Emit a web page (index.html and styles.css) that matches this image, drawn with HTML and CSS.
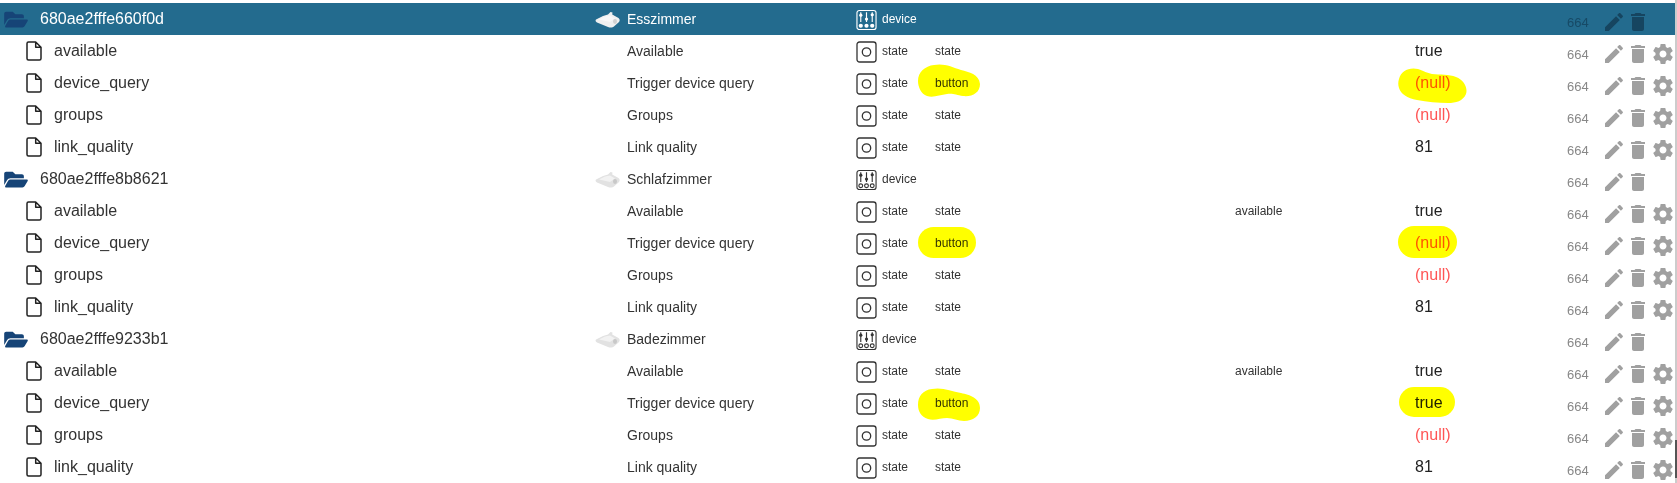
FILE: index.html
```html
<!DOCTYPE html>
<html lang="de">
<head>
<meta charset="utf-8">
<title>Objekte</title>
<link rel="stylesheet" href="styles.css">
</head>
<body>
<svg class="defs" width="0" height="0" aria-hidden="true">
  <defs>
    <symbol id="i-folder" viewBox="0 0 576 512"><path d="M572.694 292.093L500.27 416.248A63.997 63.997 0 0 1 444.989 448H45.025c-18.523 0-30.064-20.093-20.731-36.093l72.424-124.155A64 64 0 0 1 152 256h399.964c18.523 0 30.064 20.093 20.73 36.093zM152 224h328v-48c0-26.51-21.49-48-48-48H272l-64-64H48C21.49 64 0 85.49 0 112v278.046l69.077-118.418C86.214 242.25 117.989 224 152 224z"/></symbol>
    <symbol id="i-file" viewBox="0 0 16 20"><path d="M2.5 1h7.2L15 6.300v11.200a1.500 1.500 0 0 1-1.500 1.500h-11A1.500 1.500 0 0 1 1 17.500v-15A1.500 1.500 0 0 1 2.500 1zM9.700 1v5.300H15" fill="none" stroke="currentColor" stroke-width="1.500" stroke-linejoin="round"/></symbol>
    <symbol id="i-pencil" viewBox="0 0 24 24"><path d="M3 17.250V21h3.750L17.810 9.940l-3.750-3.750L3 17.250zM20.710 7.040c.39-.39.39-1.020 0-1.410l-2.340-2.340c-.39-.39-1.020-.39-1.410 0l-1.830 1.830 3.750 3.750 1.830-1.830z"/></symbol>
    <symbol id="i-trash" viewBox="0 0 24 24"><path d="M6 19c0 1.100.9 2 2 2h8c1.100 0 2-.9 2-2V7H6v12zM19 4h-3.500l-1-1h-5l-1 1H5v2h14V4z"/></symbol>
    <symbol id="i-gear" viewBox="0 0 24 24"><path d="M19.430 12.980c.04-.32.07-.64.07-.98s-.03-.66-.07-.98l2.110-1.650c.19-.15.24-.42.12-.64l-2-3.460c-.12-.22-.39-.3-.61-.22l-2.490 1c-.52-.4-1.080-.73-1.690-.98l-.38-2.650A.488.488 0 0 0 14 2h-4c-.25 0-.46.18-.49.420l-.38 2.650c-.61.25-1.170.59-1.690.98l-2.490-1c-.23-.09-.49 0-.61.220l-2 3.460c-.13.220-.07.490.12.640l2.110 1.650c-.04.320-.07.650-.07.980s.03.660.07.980l-2.110 1.650c-.19.150-.24.420-.12.640l2 3.460c.12.220.39.300.61.220l2.490-1c.52.400 1.080.730 1.690.980l.38 2.650c.03.240.24.420.49.420h4c.25 0 .46-.18.49-.42l.38-2.650c.61-.25 1.170-.59 1.690-.98l2.490 1c.23.090.49 0 .61-.22l2-3.460c.12-.22.070-.49-.12-.64l-2.110-1.650zM12 15.500c-1.930 0-3.500-1.570-3.500-3.500s1.570-3.500 3.500-3.500 3.500 1.570 3.500 3.500-1.570 3.500-3.500 3.500z"/></symbol>
    <symbol id="i-state" viewBox="0 0 21 22"><rect x="1" y="1" width="19" height="20" rx="2.500" fill="none" stroke="currentColor" stroke-width="1.300"/><circle cx="10.500" cy="11" r="4.200" fill="none" stroke="currentColor" stroke-width="1.300"/></symbol>
    <symbol id="i-device" viewBox="0 0 22 22"><rect x="1" y="1" width="20" height="20" rx="2.500" fill="none" stroke="currentColor" stroke-width="1.200"/><path d="M5 3v10M11 3v10M17 3v10" fill="none" stroke="currentColor" stroke-width="1.200"/><circle cx="5" cy="6" r="1.700" fill="currentColor"/><circle cx="11" cy="10" r="1.700" fill="currentColor"/><circle cx="17" cy="5.500" r="1.700" fill="currentColor"/><circle cx="5" cy="17" r="2" fill="none" stroke="currentColor" stroke-width="1.200"/><circle cx="11" cy="17" r="2" fill="none" stroke="currentColor" stroke-width="1.200"/><circle cx="17" cy="17" r="2" fill="none" stroke="currentColor" stroke-width="1.200"/></symbol>
    <symbol id="i-device-on" viewBox="0 0 22 22"><rect x="1" y="1" width="20" height="20" rx="2.500" fill="none" stroke="currentColor" stroke-width="1.200"/><path d="M5 3v10M11 3v10M17 3v10" fill="none" stroke="currentColor" stroke-width="1.200"/><circle cx="5" cy="6" r="1.700" fill="currentColor"/><circle cx="11" cy="10" r="1.700" fill="currentColor"/><circle cx="17" cy="5.500" r="1.700" fill="currentColor"/><circle cx="5" cy="17" r="2.200" fill="currentColor"/><circle cx="11" cy="17" r="2.200" fill="currentColor"/><circle cx="17" cy="17" r="2.200" fill="currentColor"/></symbol>
    <filter id="soft" x="-20%" y="-20%" width="140%" height="140%"><feGaussianBlur stdDeviation="0.500"/></filter>
    <symbol id="i-plug" viewBox="0 0 25 17"><g filter="url(#soft)"><path d="M1 8.500L8 5l5-1.500L15.500 1l2 .5-.3 2L23.500 7c1.500 1.200 1.500 3 .5 4l-4.500 4c-2 1.800-4 2-6.500 1L2 11.500c-1.500-.7-1.800-2.200-1-3z"/><path d="M4 8.500l6-3 5-1 5 3-5 3.500z" fill="#fff" opacity=".55"/><ellipse cx="20" cy="10.500" rx="2" ry="2.400" fill="#999" opacity=".35"/></g></symbol>
  </defs>
</svg>

<main class="tree">
  <div class="row row-selected">
    <div class="c-name"><svg class="ico-folder"><use href="#i-folder"/></svg><span>680ae2fffe660f0d</span></div>
    <div class="c-room-ico"><svg class="ico-plug"><use href="#i-plug"/></svg></div>
    <div class="c-title">Esszimmer</div>
    <div class="c-type"><svg class="ico-type"><use href="#i-device-on"/></svg><span>device</span></div>
    <div class="c-role"></div><div class="c-room"></div><div class="c-val"></div>
    <div class="c-num">664</div>
    <div class="c-act"><svg class="ico-pencil"><use href="#i-pencil"/></svg><svg class="ico-trash"><use href="#i-trash"/></svg></div>
  </div>
  <div class="row">
    <div class="c-name c-child"><svg class="ico-file"><use href="#i-file"/></svg><span>available</span></div>
    <div class="c-room-ico"></div>
    <div class="c-title">Available</div>
    <div class="c-type"><svg class="ico-type"><use href="#i-state"/></svg><span>state</span></div>
    <div class="c-role">state</div><div class="c-room"></div><div class="c-val">true</div>
    <div class="c-num">664</div>
    <div class="c-act"><svg class="ico-pencil"><use href="#i-pencil"/></svg><svg class="ico-trash"><use href="#i-trash"/></svg><svg class="ico-gear"><use href="#i-gear"/></svg></div>
  </div>
  <div class="row">
    <div class="c-name c-child"><svg class="ico-file"><use href="#i-file"/></svg><span>device_query</span></div>
    <div class="c-room-ico"></div>
    <div class="c-title">Trigger device query</div>
    <div class="c-type"><svg class="ico-type"><use href="#i-state"/></svg><span>state</span></div>
    <div class="c-role">button<svg class="mark mark-role1" viewBox="0 0 62 34" preserveAspectRatio="none"><path d="M16 1C26-1 34 3 43 6c8 2 18 4 19 14 0 9-8 13-17 12-7-1-10-3-16-2-7 1-14 4-20 2C3 30 0 23 0 17 0 8 7 2 16 1z"/></svg></div>
    <div class="c-room"></div>
    <div class="c-val null">(null)<svg class="mark mark-val1" viewBox="0 0 69 35" preserveAspectRatio="none"><path d="M1 11C3 3 11-1 20 1c6 2 9 4 14 5 8 1 17 0 24 3 8 3 12 11 10 17-3 7-10 9-18 9-10 0-21-1-31-3C9 30 3 26 1 20c-1-3-1-6 0-9z"/></svg></div>
    <div class="c-num">664</div>
    <div class="c-act"><svg class="ico-pencil"><use href="#i-pencil"/></svg><svg class="ico-trash"><use href="#i-trash"/></svg><svg class="ico-gear"><use href="#i-gear"/></svg></div>
  </div>
  <div class="row">
    <div class="c-name c-child"><svg class="ico-file"><use href="#i-file"/></svg><span>groups</span></div>
    <div class="c-room-ico"></div>
    <div class="c-title">Groups</div>
    <div class="c-type"><svg class="ico-type"><use href="#i-state"/></svg><span>state</span></div>
    <div class="c-role">state</div><div class="c-room"></div><div class="c-val null">(null)</div>
    <div class="c-num">664</div>
    <div class="c-act"><svg class="ico-pencil"><use href="#i-pencil"/></svg><svg class="ico-trash"><use href="#i-trash"/></svg><svg class="ico-gear"><use href="#i-gear"/></svg></div>
  </div>
  <div class="row">
    <div class="c-name c-child"><svg class="ico-file"><use href="#i-file"/></svg><span>link_quality</span></div>
    <div class="c-room-ico"></div>
    <div class="c-title">Link quality</div>
    <div class="c-type"><svg class="ico-type"><use href="#i-state"/></svg><span>state</span></div>
    <div class="c-role">state</div><div class="c-room"></div><div class="c-val">81</div>
    <div class="c-num">664</div>
    <div class="c-act"><svg class="ico-pencil"><use href="#i-pencil"/></svg><svg class="ico-trash"><use href="#i-trash"/></svg><svg class="ico-gear"><use href="#i-gear"/></svg></div>
  </div>

  <div class="row">
    <div class="c-name"><svg class="ico-folder"><use href="#i-folder"/></svg><span>680ae2fffe8b8621</span></div>
    <div class="c-room-ico"><svg class="ico-plug"><use href="#i-plug"/></svg></div>
    <div class="c-title">Schlafzimmer</div>
    <div class="c-type"><svg class="ico-type"><use href="#i-device"/></svg><span>device</span></div>
    <div class="c-role"></div><div class="c-room"></div><div class="c-val"></div>
    <div class="c-num">664</div>
    <div class="c-act"><svg class="ico-pencil"><use href="#i-pencil"/></svg><svg class="ico-trash"><use href="#i-trash"/></svg></div>
  </div>
  <div class="row">
    <div class="c-name c-child"><svg class="ico-file"><use href="#i-file"/></svg><span>available</span></div>
    <div class="c-room-ico"></div>
    <div class="c-title">Available</div>
    <div class="c-type"><svg class="ico-type"><use href="#i-state"/></svg><span>state</span></div>
    <div class="c-role">state</div><div class="c-room">available</div><div class="c-val">true</div>
    <div class="c-num">664</div>
    <div class="c-act"><svg class="ico-pencil"><use href="#i-pencil"/></svg><svg class="ico-trash"><use href="#i-trash"/></svg><svg class="ico-gear"><use href="#i-gear"/></svg></div>
  </div>
  <div class="row">
    <div class="c-name c-child"><svg class="ico-file"><use href="#i-file"/></svg><span>device_query</span></div>
    <div class="c-room-ico"></div>
    <div class="c-title">Trigger device query</div>
    <div class="c-type"><svg class="ico-type"><use href="#i-state"/></svg><span>state</span></div>
    <div class="c-role">button<span class="pill pill-role"></span></div>
    <div class="c-room"></div>
    <div class="c-val null">(null)<span class="pill pill-val"></span></div>
    <div class="c-num">664</div>
    <div class="c-act"><svg class="ico-pencil"><use href="#i-pencil"/></svg><svg class="ico-trash"><use href="#i-trash"/></svg><svg class="ico-gear"><use href="#i-gear"/></svg></div>
  </div>
  <div class="row">
    <div class="c-name c-child"><svg class="ico-file"><use href="#i-file"/></svg><span>groups</span></div>
    <div class="c-room-ico"></div>
    <div class="c-title">Groups</div>
    <div class="c-type"><svg class="ico-type"><use href="#i-state"/></svg><span>state</span></div>
    <div class="c-role">state</div><div class="c-room"></div><div class="c-val null">(null)</div>
    <div class="c-num">664</div>
    <div class="c-act"><svg class="ico-pencil"><use href="#i-pencil"/></svg><svg class="ico-trash"><use href="#i-trash"/></svg><svg class="ico-gear"><use href="#i-gear"/></svg></div>
  </div>
  <div class="row">
    <div class="c-name c-child"><svg class="ico-file"><use href="#i-file"/></svg><span>link_quality</span></div>
    <div class="c-room-ico"></div>
    <div class="c-title">Link quality</div>
    <div class="c-type"><svg class="ico-type"><use href="#i-state"/></svg><span>state</span></div>
    <div class="c-role">state</div><div class="c-room"></div><div class="c-val">81</div>
    <div class="c-num">664</div>
    <div class="c-act"><svg class="ico-pencil"><use href="#i-pencil"/></svg><svg class="ico-trash"><use href="#i-trash"/></svg><svg class="ico-gear"><use href="#i-gear"/></svg></div>
  </div>

  <div class="row">
    <div class="c-name"><svg class="ico-folder"><use href="#i-folder"/></svg><span>680ae2fffe9233b1</span></div>
    <div class="c-room-ico"><svg class="ico-plug"><use href="#i-plug"/></svg></div>
    <div class="c-title">Badezimmer</div>
    <div class="c-type"><svg class="ico-type"><use href="#i-device"/></svg><span>device</span></div>
    <div class="c-role"></div><div class="c-room"></div><div class="c-val"></div>
    <div class="c-num">664</div>
    <div class="c-act"><svg class="ico-pencil"><use href="#i-pencil"/></svg><svg class="ico-trash"><use href="#i-trash"/></svg></div>
  </div>
  <div class="row">
    <div class="c-name c-child"><svg class="ico-file"><use href="#i-file"/></svg><span>available</span></div>
    <div class="c-room-ico"></div>
    <div class="c-title">Available</div>
    <div class="c-type"><svg class="ico-type"><use href="#i-state"/></svg><span>state</span></div>
    <div class="c-role">state</div><div class="c-room">available</div><div class="c-val">true</div>
    <div class="c-num">664</div>
    <div class="c-act"><svg class="ico-pencil"><use href="#i-pencil"/></svg><svg class="ico-trash"><use href="#i-trash"/></svg><svg class="ico-gear"><use href="#i-gear"/></svg></div>
  </div>
  <div class="row">
    <div class="c-name c-child"><svg class="ico-file"><use href="#i-file"/></svg><span>device_query</span></div>
    <div class="c-room-ico"></div>
    <div class="c-title">Trigger device query</div>
    <div class="c-type"><svg class="ico-type"><use href="#i-state"/></svg><span>state</span></div>
    <div class="c-role">button<svg class="mark mark-role3" viewBox="0 0 62 34" preserveAspectRatio="none"><path d="M14 1C24-1 33 3 43 5c9 2 19 5 19 15 0 8-7 13-16 13-6 0-11-3-17-3-6 0-13 3-19 1C3 29 0 23 0 17 0 8 5 2 14 1z"/></svg></div>
    <div class="c-room"></div>
    <div class="c-val">true<span class="pill pill-true"></span></div>
    <div class="c-num">664</div>
    <div class="c-act"><svg class="ico-pencil"><use href="#i-pencil"/></svg><svg class="ico-trash"><use href="#i-trash"/></svg><svg class="ico-gear"><use href="#i-gear"/></svg></div>
  </div>
  <div class="row">
    <div class="c-name c-child"><svg class="ico-file"><use href="#i-file"/></svg><span>groups</span></div>
    <div class="c-room-ico"></div>
    <div class="c-title">Groups</div>
    <div class="c-type"><svg class="ico-type"><use href="#i-state"/></svg><span>state</span></div>
    <div class="c-role">state</div><div class="c-room"></div><div class="c-val null">(null)</div>
    <div class="c-num">664</div>
    <div class="c-act"><svg class="ico-pencil"><use href="#i-pencil"/></svg><svg class="ico-trash"><use href="#i-trash"/></svg><svg class="ico-gear"><use href="#i-gear"/></svg></div>
  </div>
  <div class="row">
    <div class="c-name c-child"><svg class="ico-file"><use href="#i-file"/></svg><span>link_quality</span></div>
    <div class="c-room-ico"></div>
    <div class="c-title">Link quality</div>
    <div class="c-type"><svg class="ico-type"><use href="#i-state"/></svg><span>state</span></div>
    <div class="c-role">state</div><div class="c-room"></div><div class="c-val">81</div>
    <div class="c-num">664</div>
    <div class="c-act"><svg class="ico-pencil"><use href="#i-pencil"/></svg><svg class="ico-trash"><use href="#i-trash"/></svg><svg class="ico-gear"><use href="#i-gear"/></svg></div>
  </div>
</main>
<div class="scrollbar"><div class="thumb"></div></div>
</body>
</html>
```
FILE: styles.css
```css
* { box-sizing: border-box; }
html, body { margin: 0; height: 100%; }
body {
  display: flex;
  overflow: hidden;
  background: #fff;
  color: #333;
  font-family: "Liberation Sans", Arial, sans-serif;
}
.defs { position: absolute; }
.tree { flex: 1; padding-top: 3px; min-width: 0; }
.row {
  display: grid;
  grid-template-columns: 590px 37px 230px 78px 300px 180px 152px 36px 1fr;
  height: 32px;
  align-items: center;
}
.row-selected { background: #236b8e; color: #fff; }
.c-name { display: flex; align-items: center; font-size: 16px; color: #333; }
.row-selected .c-name { color: #fff; }
.c-child { padding-left: 26px; }
.c-title { font-size: 14px; }
.c-type { display: flex; align-items: center; gap: 5px; font-size: 12px; margin-left: -1px; }
.c-role, .c-room { font-size: 12px; position: relative; }
.c-val { font-size: 16px; position: relative; color: #222; }
.c-val.null { color: #f55; }
.c-num { font-size: 13px; color: #888; padding-top: 7px; }
.row-selected .c-num { color: #174a66; }
.c-act { display: flex; align-items: center; padding-top: 6px; fill: #a0a0a0; }
.row-selected .c-act { fill: #164560; }
.ico-folder { width: 24px; height: 21px; margin-left: 4px; margin-right: 12px; fill: #164477; }
.ico-file { width: 16px; height: 20px; margin-right: 12px; color: #222; }
.ico-plug { width: 25px; height: 17px; margin-left: 5px; fill: #e2e2e2; display: block; }
.row-selected .ico-plug { fill: #f0f0f0; }
.ico-type { width: 21px; height: 22px; color: #333; flex: none; position: relative; top: 1px; }
.row-selected .ico-type { color: #fff; }
.ico-pencil, .ico-trash, .ico-gear { width: 24px; height: 24px; flex: none; }
.ico-pencil { margin-left: -1px; }
.ico-gear { margin-left: 1px; }
.mark, .pill {
  position: absolute;
  fill: #ff0;
  mix-blend-mode: multiply;
  pointer-events: none;
}
.pill { background: #ff0; border-radius: 17px; }
.mark-role1 { left: -17px; top: -12px; width: 62px; height: 34px; }
.mark-val1 { left: -17px; top: -6px; width: 69px; height: 35px; }
.mark-role3 { left: -17px; top: -8px; width: 62px; height: 34px; }
.pill-role { left: -17px; top: -9px; width: 58px; height: 31px; }
.pill-val { left: -17px; top: -8px; width: 59px; height: 32px; }
.pill-true { left: -16px; top: -7px; width: 56px; height: 30px; }
.scrollbar { width: 2px; flex: none; height: 100%; background: #ccc; }
.thumb { height: 38px; margin-top: 440px; background: #555; }
```
